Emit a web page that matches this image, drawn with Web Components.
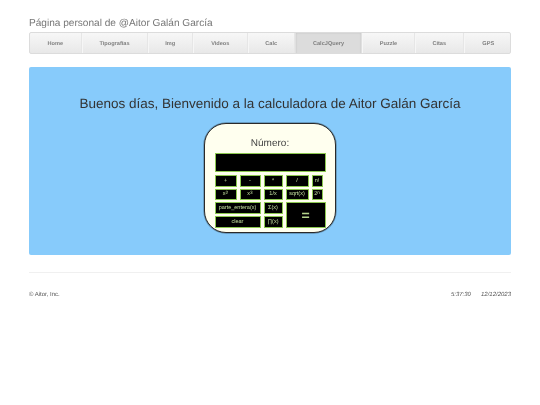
<!DOCTYPE html>
<html lang="es">
<head>
<meta charset="utf-8">
<title>Calculadora</title>
<style>
html,body{margin:0;padding:0;background:#fff;font-family:"Liberation Sans",Arial,sans-serif;color:#333;text-rendering:geometricPrecision}
sup{font-size:85%;line-height:0;vertical-align:1.5px}
</style>
</head>
<body>
<site-page>
  <site-nav slot="nav">
    <nav-item style="--w:51.5px">Home</nav-item>
    <nav-item style="--w:66px">Tipografías</nav-item>
    <nav-item style="--w:45.5px">Img</nav-item>
    <nav-item style="--w:54.5px">Videos</nav-item>
    <nav-item style="--w:47.5px">Calc</nav-item>
    <nav-item style="--w:67px" active>CalcJQuery</nav-item>
    <nav-item style="--w:53px">Puzzle</nav-item>
    <nav-item style="--w:48.5px">Citas</nav-item>
    <nav-item style="--w:48.5px">GPS</nav-item>
  </site-nav>
  <hero-panel slot="main" heading="Buenos días, Bienvenido a la calculadora de Aitor Galán García">
    <calc-widget>
      <calc-key>+</calc-key><calc-key>-</calc-key><calc-key>*</calc-key><calc-key>/</calc-key><calc-key>n!</calc-key>
      <calc-key style="grid-column:1">x<sup>2</sup></calc-key><calc-key>x<sup>3</sup></calc-key><calc-key>1/x</calc-key><calc-key>sqrt(x)</calc-key><calc-key>2<sup>n</sup></calc-key>
      <calc-key style="grid-column:1/3">parte_entera(x)</calc-key><calc-key>Σ(x)</calc-key><calc-key big style="grid-column:4/7;grid-row:3/5">=</calc-key>
      <calc-key style="grid-column:1/3">clear</calc-key><calc-key>∏(x)</calc-key>
    </calc-widget>
  </hero-panel>
  <site-footer slot="footer" time="5:37:30" date="12/12/2023">© Aitor, Inc.</site-footer>
</site-page>
<script>
function def(name, html){
  customElements.define(name, class extends HTMLElement{
    constructor(){super();this.attachShadow({mode:'open'}).innerHTML=typeof html==='function'?'':html;}
    connectedCallback(){ if(typeof html==='function') this.shadowRoot.innerHTML=html(this); }
  });
}
def('site-page',`<style>
:host{display:block;width:482px;margin:0 auto;padding-top:16px;filter:blur(.3px)}
h3{margin:0;font:400 10.1px/12px "Liberation Sans",Arial,sans-serif;color:#777;height:14px;padding-top:2px}
.main{display:block;margin-top:13px}
.foot{display:block;margin-top:17px}
</style>
<h3>Página personal de @Aitor Galán García</h3>
<slot name="nav"></slot>
<div class="main"><slot name="main"></slot></div>
<div class="foot"><slot name="footer"></slot></div>`);
def('site-nav',`<style>
:host{display:flex;height:22px;box-sizing:border-box;border:1px solid #dcdcdc;border-radius:2px;background:linear-gradient(#f7f7f7,#e8e8e8);overflow:hidden}
</style><slot></slot>`);
def('nav-item',()=>`<style>
:host{display:flex;align-items:center;justify-content:center;width:var(--w);flex:none;box-sizing:border-box;padding-top:3px;font:700 5.6px/1 "Liberation Sans",Arial,sans-serif;color:#808080;border-right:1px solid #e6e6e6;border-left:1px solid #f6f6f6;margin-top:-1px;margin-bottom:-1px}
:host(:first-child){border-left:0}
:host(:last-child){border-right:0}
:host([active]){background:#dcdcdc;box-shadow:inset 0 1px 2px rgba(0,0,0,.14);border-color:#e0e0e0}
</style><slot></slot>`);
def('hero-panel',e=>`<style>
:host{display:flex;flex-direction:column;align-items:center;height:188px;box-sizing:border-box;background:#87cbfb;border-radius:2px;padding-top:29px}
h1{margin:0;font:400 13.5px/16px "Liberation Sans",Arial,sans-serif;color:#333;white-space:nowrap}
.w{margin-top:11px}
</style><h1>${e.getAttribute('heading')}</h1><div class="w"><slot></slot></div>`);
def('calc-widget',`<style>
:host{display:block;width:132px;height:110px;box-sizing:border-box;background:#ffffef;border:1.5px solid #2a2a2a;border-radius:22px;box-shadow:0 0 0 .7px rgba(60,90,110,.55);padding:14px 0 0 9.5px}
.label{font:400 10px/12px "Liberation Sans",Arial,sans-serif;color:#444;text-align:center;width:111px;height:13px}
.display{box-sizing:border-box;width:111px;height:19px;background:#000;border:1.5px solid #8cc850;margin-top:2px}
.keys{display:grid;grid-template-columns:22px 21px 19px 23px 11px 0;grid-auto-rows:11.5px;gap:2.2px 3px;margin-top:3px}
</style><div class="label">Número:</div><div class="display"></div><div class="keys"><slot></slot></div>`);
def('calc-key',`<style>
:host{display:flex;align-items:center;justify-content:center;box-sizing:border-box;padding-top:1.5px;background:#000;border:1.3px solid #8cc850;color:#c4e0a0;font:400 5.5px/1 "Liberation Sans",Arial,sans-serif;white-space:nowrap;overflow:hidden}
:host([big]){font-size:14px;font-weight:700;color:#b4d48c;padding-top:0}
</style><span><slot></slot></span>`);
def('site-footer',e=>`<style>
:host{display:flex;justify-content:space-between;align-items:center;border-top:1px solid #f0f0f0;padding-top:18.5px;font:400 6px/7px "Liberation Sans",Arial,sans-serif;color:#555}
.r{font-style:italic;display:flex;gap:10px}
</style><div><slot></slot></div><div class="r"><span>${e.getAttribute('time')}</span><span>${e.getAttribute('date')}</span></div>`);
</script>
</body>
</html>
